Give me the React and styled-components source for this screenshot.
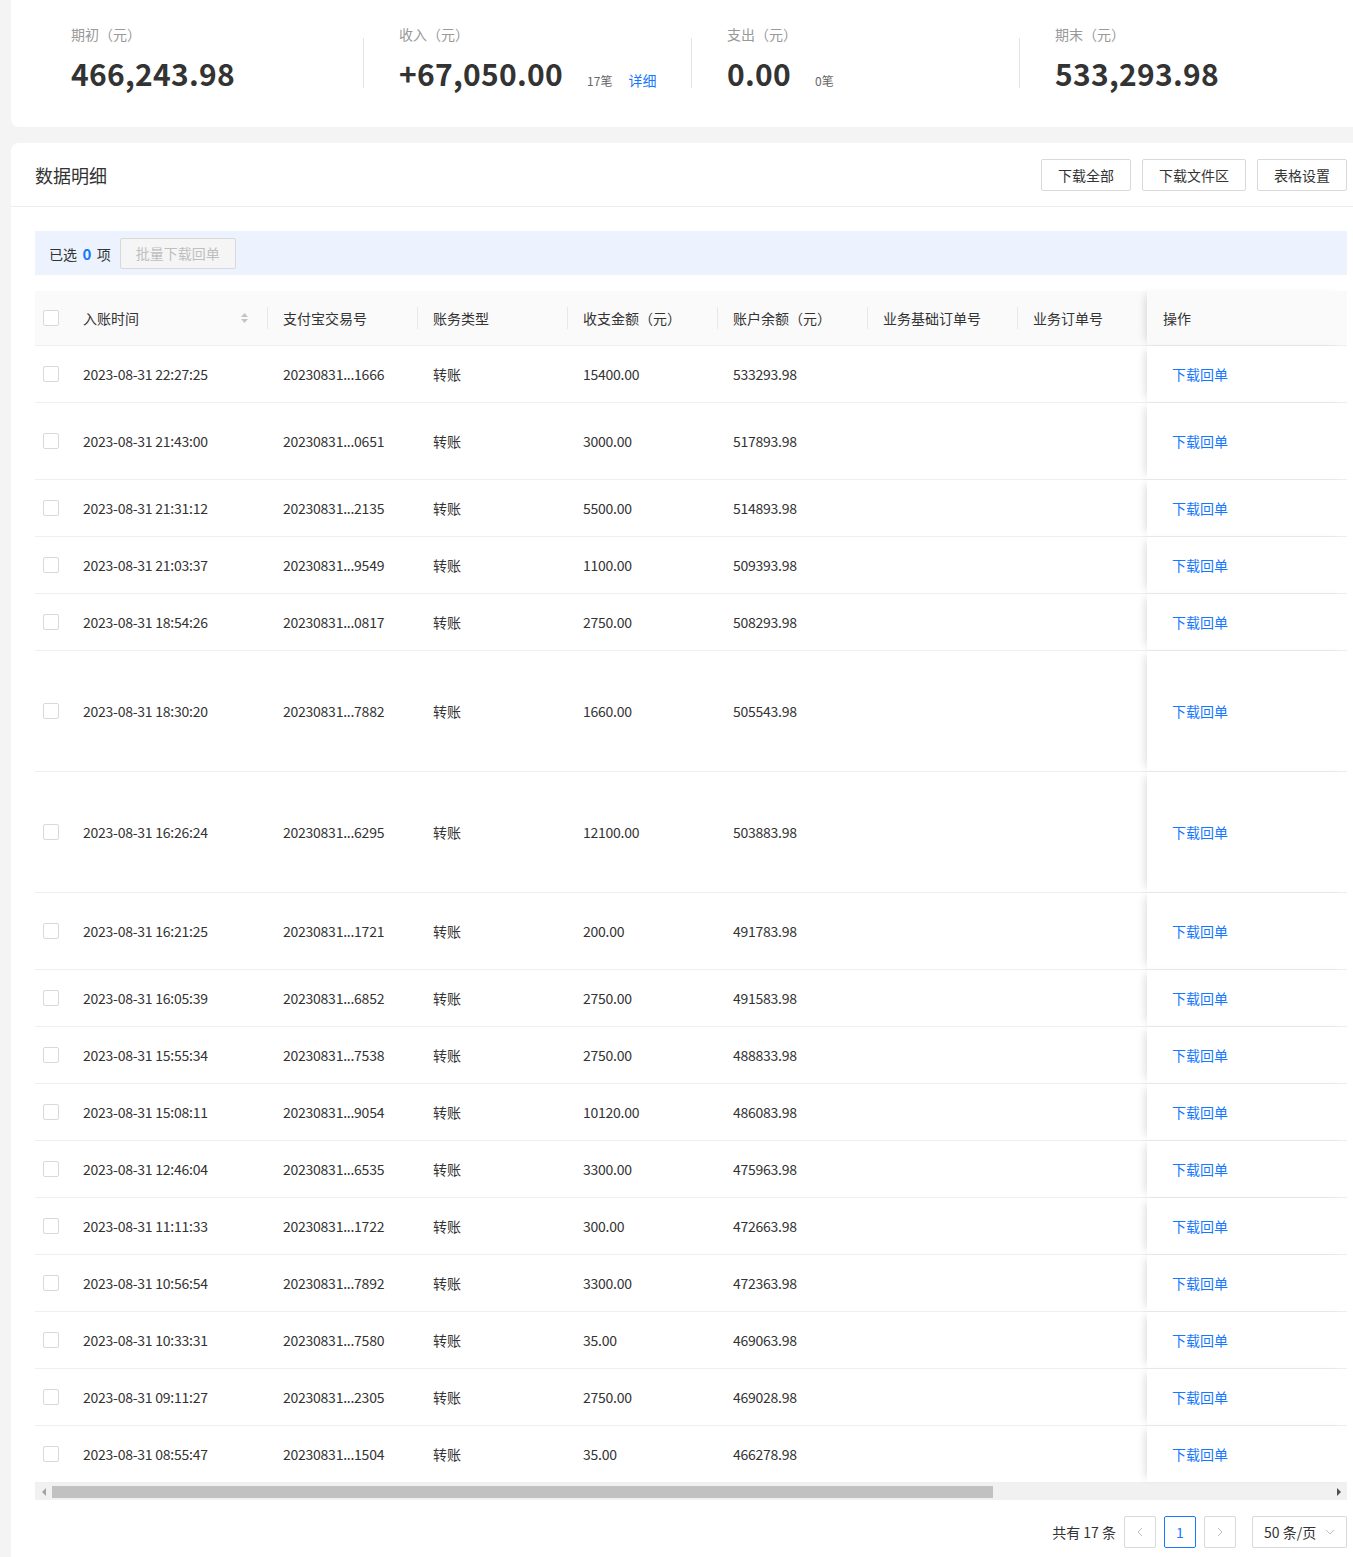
import React from "react";
import styled, { createGlobalStyle } from "styled-components";

const GlobalStyle = createGlobalStyle`
  html, body {
    margin: 0;
    padding: 0;
    background: #f4f4f4;
    overflow-x: hidden;
  }
  body {
    font-family: "Noto Sans CJK SC", "Open Sans", sans-serif;
    color: #333;
  }
  * { box-sizing: border-box; }
`;

const Page = styled.div`
  position: relative;
  width: 1371px;
  padding-left: 11px;
  display: flex;
  flex-direction: column;
  gap: 16px;
`;

const StatCard = styled.section`
  background: #fff;
  border-radius: 0 0 8px 8px;
  padding: 23px 24px 34px;
  display: grid;
  grid-template-columns: repeat(4, 1fr);
`;

const StatItem = styled.div`
  position: relative;
  padding-left: 36px;
  &::before {
    content: "";
    display: ${(p) => (p.$divider ? "block" : "none")};
    position: absolute;
    left: 0;
    top: 15px;
    width: 1px;
    height: 50px;
    background: #e3e3e3;
  }
`;

const StatLabel = styled.div`
  height: 22px;
  font-size: 14px;
  line-height: 22px;
  color: #999;
`;

const StatValueRow = styled.div`
  margin-top: 8px;
  height: 40px;
  display: flex;
  align-items: baseline;
  line-height: 40px;
  overflow: visible;
`;

const StatValue = styled.span`
  font-size: 30px;
  font-weight: 700;
  color: #333;
  letter-spacing: 0.3px;
  line-height: 40px;
`;

const StatCount = styled.span`
  margin-left: 24px;
  font-size: 12px;
  color: #666;
  line-height: 40px;
`;

const StatLink = styled.a`
  margin-left: 16px;
  font-size: 14px;
  color: #1677ff;
  text-decoration: none;
  cursor: pointer;
  line-height: 40px;
`;

const DetailCard = styled.section`
  background: #fff;
  border-radius: 8px 8px 0 0;
`;

const DetailHeader = styled.header`
  height: 64px;
  padding: 0 24px;
  display: flex;
  align-items: center;
  justify-content: space-between;
  border-bottom: 1px solid #ededed;
`;

const Title = styled.h2`
  margin: 0;
  font-size: 18px;
  font-weight: 400;
  color: #333;
`;

const Actions = styled.div`
  display: flex;
  gap: 11px;
`;

const Button = styled.button`
  height: 32px;
  padding: 0 16px;
  border: 1px solid #d9d9d9;
  border-radius: 2px;
  background: #fff;
  color: #333;
  font-family: inherit;
  font-size: 14px;
  cursor: pointer;
`;

const DisabledButton = styled(Button)`
  height: 31px;
  padding: 0 15px;
  background: #f5f5f5;
  color: #bfbfbf;
  cursor: not-allowed;
`;

const Body = styled.div`
  padding: 24px 24px 16px;
`;

const SelectionBar = styled.div`
  height: 44px;
  padding: 0 14px;
  display: flex;
  align-items: center;
  gap: 9px;
  background: #ecf3fe;
  font-size: 14px;
  color: #333;
`;

const Count = styled.b`
  color: #1677ff;
  font-weight: 700;
  font-size: 15px;
  margin: 0 2px;
`;

const Table = styled.div`
  margin-top: 16px;
`;

const Row = styled.div`
  display: grid;
  grid-template-columns: 32px 200px 150px 150px 150px 150px 150px 130px 200px;
  height: ${(p) => p.$h}px;
  border-bottom: 1px solid #efefef;
  background: ${(p) => (p.$head ? "#fafafa" : "#fff")};
`;

const Cell = styled.div`
  position: relative;
  display: flex;
  align-items: center;
  justify-content: ${(p) => (p.$between ? "space-between" : "flex-start")};
  padding: 0 ${(p) => (p.$between ? "18px" : "16px")} 0 16px;
  font-size: 14px;
  letter-spacing: ${(p) => (p.$num ? "-0.25px" : "0")};
  color: #333;
  white-space: nowrap;
  overflow: hidden;
  &::before {
    content: "";
    display: ${(p) => (p.$sep ? "block" : "none")};
    position: absolute;
    left: 0;
    top: 50%;
    width: 1px;
    height: 22px;
    margin-top: -11px;
    background: #e8e8e8;
  }
`;

const CheckCell = styled.div`
  display: flex;
  align-items: center;
  justify-content: center;
`;

const Checkbox = styled.span`
  width: 16px;
  height: 16px;
  border: 1px solid #d9d9d9;
  border-radius: 2px;
  background: #fff;
`;

const FixedCell = styled.div`
  position: relative;
  z-index: 1;
  display: flex;
  align-items: center;
  padding-left: ${(p) => (p.$head ? "16px" : "25px")};
  background: ${(p) => (p.$head ? "#fafafa" : "#fff")};
  box-shadow: -6px 0 8px -4px rgba(0, 0, 0, 0.13);
  font-size: 14px;
  color: #333;
  white-space: nowrap;
`;

const Link = styled.a`
  color: #1677ff;
  text-decoration: none;
  cursor: pointer;
`;

const Scrollbar = styled.div`
  height: 17px;
  background: #f1f1f1;
  display: flex;
  align-items: center;
`;

const ScrollArrow = styled.div`
  width: 17px;
  height: 17px;
  flex: none;
  display: flex;
  align-items: center;
  justify-content: center;
  margin-left: ${(p) => (p.$end ? "auto" : "0")};
`;

const ScrollThumb = styled.div`
  width: 941px;
  height: 12px;
  background: #c1c1c1;
`;

const Pagination = styled.div`
  margin-top: 16px;
  display: flex;
  justify-content: flex-end;
  align-items: center;
  gap: 8px;
  font-size: 14px;
  color: #333;
`;

const Total = styled.span``;

const PageButton = styled.button`
  width: 32px;
  height: 32px;
  padding: 0;
  border: 1px solid ${(p) => (p.$active ? "#1677ff" : "#d9d9d9")};
  border-radius: 2px;
  background: #fff;
  color: ${(p) => (p.$active ? "#1677ff" : "#bfbfbf")};
  font-family: inherit;
  font-size: 14px;
  display: flex;
  align-items: center;
  justify-content: center;
`;

const SizeSelect = styled.div`
  margin-left: 8px;
  width: 95px;
  height: 32px;
  padding: 0 10px 0 11px;
  border: 1px solid #d9d9d9;
  border-radius: 2px;
  display: flex;
  align-items: center;
  justify-content: space-between;
  color: #333;
`;

const FloatWidget = styled.div`
  position: absolute;
  left: 1234px;
  top: 1550px;
  width: 130px;
  height: 8px;
  pointer-events: none;
`;

const SortIcon = () => (
  <svg width="9" height="12" viewBox="0 0 9 12">
    <path d="M4.5 1 L8 5 H1 Z" fill="#c4c4c4" />
    <path d="M4.5 11 L8 7 H1 Z" fill="#c4c4c4" />
  </svg>
);

const Chevron = ({ dir, color = "#bfbfbf", size = 12 }) => {
  const d =
    dir === "left"
      ? "M8 2 L4 6 L8 10"
      : dir === "right"
      ? "M4 2 L8 6 L4 10"
      : "M2 4 L6 8 L10 4";
  return (
    <svg width={size} height={size} viewBox="0 0 12 12">
      <path d={d} fill="none" stroke={color} strokeWidth="1" />
    </svg>
  );
};

const Tri = ({ dir, color }) => (
  <svg width="6" height="8" viewBox="0 0 6 8">
    <path d={dir === "left" ? "M5 0 L1 4 L5 8 Z" : "M1 0 L5 4 L1 8 Z"} fill={color} />
  </svg>
);

const rows = [
  ["22:27:25", "1666", "15400.00", "533293.98", 57],
  ["21:43:00", "0651", "3000.00", "517893.98", 77],
  ["21:31:12", "2135", "5500.00", "514893.98", 57],
  ["21:03:37", "9549", "1100.00", "509393.98", 57],
  ["18:54:26", "0817", "2750.00", "508293.98", 57],
  ["18:30:20", "7882", "1660.00", "505543.98", 121],
  ["16:26:24", "6295", "12100.00", "503883.98", 121],
  ["16:21:25", "1721", "200.00", "491783.98", 77],
  ["16:05:39", "6852", "2750.00", "491583.98", 57],
  ["15:55:34", "7538", "2750.00", "488833.98", 57],
  ["15:08:11", "9054", "10120.00", "486083.98", 57],
  ["12:46:04", "6535", "3300.00", "475963.98", 57],
  ["11:11:33", "1722", "300.00", "472663.98", 57],
  ["10:56:54", "7892", "3300.00", "472363.98", 57],
  ["10:33:31", "7580", "35.00", "469063.98", 57],
  ["09:11:27", "2305", "2750.00", "469028.98", 57],
  ["08:55:47", "1504", "35.00", "466278.98", 57],
];

const headers = ["支付宝交易号", "账务类型", "收支金额（元）", "账户余额（元）", "业务基础订单号", "业务订单号"];

export default function App() {
  return (
    <>
      <GlobalStyle />
      <Page>
        <StatCard>
          <StatItem>
            <StatLabel>期初（元）</StatLabel>
            <StatValueRow>
              <StatValue>466,243.98</StatValue>
            </StatValueRow>
          </StatItem>
          <StatItem $divider>
            <StatLabel>收入（元）</StatLabel>
            <StatValueRow>
              <StatValue>+67,050.00</StatValue>
              <StatCount>17笔</StatCount>
              <StatLink>详细</StatLink>
            </StatValueRow>
          </StatItem>
          <StatItem $divider>
            <StatLabel>支出（元）</StatLabel>
            <StatValueRow>
              <StatValue>0.00</StatValue>
              <StatCount>0笔</StatCount>
            </StatValueRow>
          </StatItem>
          <StatItem $divider>
            <StatLabel>期末（元）</StatLabel>
            <StatValueRow>
              <StatValue>533,293.98</StatValue>
            </StatValueRow>
          </StatItem>
        </StatCard>

        <DetailCard>
          <DetailHeader>
            <Title>数据明细</Title>
            <Actions>
              <Button>下载全部</Button>
              <Button>下载文件区</Button>
              <Button>表格设置</Button>
            </Actions>
          </DetailHeader>
          <Body>
            <SelectionBar>
              <span>
                已选<Count> 0 </Count>项
              </span>
              <DisabledButton disabled>批量下载回单</DisabledButton>
            </SelectionBar>

            <Table>
              <Row $head $h={55}>
                <CheckCell>
                  <Checkbox />
                </CheckCell>
                <Cell $between>
                  入账时间
                  <SortIcon />
                </Cell>
                {headers.map((h) => (
                  <Cell key={h} $sep>
                    {h}
                  </Cell>
                ))}
                <FixedCell $head>操作</FixedCell>
              </Row>
              {rows.map(([t, id, amt, bal, h]) => (
                <Row key={t} $h={h}>
                  <CheckCell>
                    <Checkbox />
                  </CheckCell>
                  <Cell $num>2023-08-31 {t}</Cell>
                  <Cell $num>20230831...{id}</Cell>
                  <Cell>转账</Cell>
                  <Cell $num>{amt}</Cell>
                  <Cell $num>{bal}</Cell>
                  <Cell />
                  <Cell />
                  <FixedCell>
                    <Link>下载回单</Link>
                  </FixedCell>
                </Row>
              ))}
              <Scrollbar>
                <ScrollArrow>
                  <Tri dir="left" color="#a3a3a3" />
                </ScrollArrow>
                <ScrollThumb />
                <ScrollArrow $end>
                  <Tri dir="right" color="#505050" />
                </ScrollArrow>
              </Scrollbar>
            </Table>

            <Pagination>
              <Total>共有 17 条</Total>
              <PageButton>
                <Chevron dir="left" />
              </PageButton>
              <PageButton $active>1</PageButton>
              <PageButton>
                <Chevron dir="right" />
              </PageButton>
              <SizeSelect>
                <span>50 条/页</span>
                <Chevron dir="down" />
              </SizeSelect>
            </Pagination>
          </Body>
        </DetailCard>
        <FloatWidget>
          <svg width="130" height="8" viewBox="0 0 130 8">
            <path d="M0 7 L22 2 L24 8 L0 8 Z" fill="#f26b2c" />
            <rect x="24" y="5" width="106" height="3" fill="#b9d3ee" />
          </svg>
        </FloatWidget>
      </Page>
    </>
  );
}
